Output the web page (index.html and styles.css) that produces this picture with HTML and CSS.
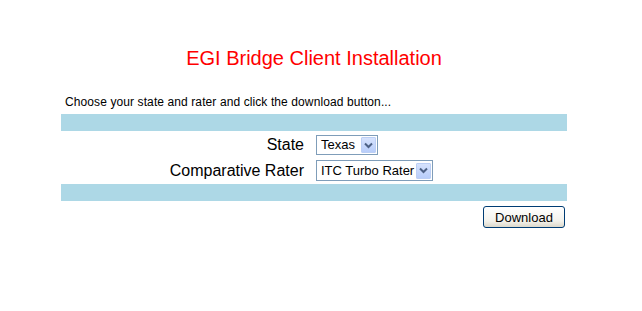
FILE: index.html
```html
<!DOCTYPE html>
<html>
<head>
<meta charset="utf-8">
<link rel="stylesheet" href="styles.css">
</head>
<body>
<div class="page">
  <h1 class="title">EGI Bridge Client Installation</h1>
  <div class="panel">
    <p class="intro">Choose your state and rater and click the download button...</p>
    <div class="bar"></div>
    <div class="form">
      <label class="label">State</label>
      <div class="field">
        <div class="select select-state">
          <span class="select-text">Texas</span>
          <span class="arrow"><svg width="9" height="7" viewBox="0 0 9 7"><path d="M1 1.5 L4.5 5 L8 1.5" fill="none" stroke="#4d6185" stroke-width="2"/></svg></span>
        </div>
      </div>
      <label class="label">Comparative Rater</label>
      <div class="field">
        <div class="select select-rater">
          <span class="select-text">ITC Turbo Rater</span>
          <span class="arrow"><svg width="9" height="7" viewBox="0 0 9 7"><path d="M1 1.5 L4.5 5 L8 1.5" fill="none" stroke="#4d6185" stroke-width="2"/></svg></span>
        </div>
      </div>
    </div>
    <div class="bar bar-bottom"></div>
    <div class="actions">
      <button class="btn">Download</button>
    </div>
  </div>
</div>
</body>
</html>
```
FILE: styles.css
```css
html, body {
  margin: 0;
  padding: 0;
  background: #ffffff;
}
body {
  font-family: "Liberation Sans", Arial, sans-serif;
  color: #000;
}
.page {
  width: 628px;
  padding-top: 46px;
}
.title {
  margin: 0;
  text-align: center;
  color: #ff0000;
  font-size: 20px;
  font-weight: normal;
  line-height: 24px;
}
.panel {
  width: 506px;
  margin: 25px auto 0;
}
.intro {
  margin: 0 0 4px 4px;
  font-size: 12px;
  line-height: 15px;
  letter-spacing: 0.1px;
}
.bar {
  height: 17px;
  background: #add8e6;
}
.bar-bottom {
  margin-top: 3px;
}
.form {
  display: grid;
  grid-template-columns: 243px 1fr;
  column-gap: 12px;
  row-gap: 5px;
  padding-top: 4px;
  align-items: center;
}
.label {
  text-align: right;
  font-size: 16px;
  line-height: 20px;
  white-space: nowrap;
}
.field {
  display: flex;
}
.select {
  display: flex;
  align-items: center;
  justify-content: space-between;
  box-sizing: border-box;
  border: 1px solid #7f9db9;
  background: #fff;
  font-size: 13px;
  padding: 0 1px 0 4px;
  white-space: nowrap;
}
.select-state {
  width: 62px;
  height: 20px;
}
.select-rater {
  width: 117px;
  height: 21px;
}
.select-text {
  line-height: 16px;
}
.arrow {
  display: flex;
  align-items: center;
  justify-content: center;
  flex: none;
  width: 15px;
  height: 16px;
  box-sizing: border-box;
  border: 1px solid #bccff5;
  background: linear-gradient(#d6e2fd, #b8cdfa);
  border-radius: 1px;
}
.actions {
  display: flex;
  justify-content: flex-end;
  padding: 5px 2px 0 0;
}
.btn {
  width: 82px;
  height: 22px;
  box-sizing: border-box;
  border: 1px solid #003c74;
  border-radius: 3px;
  background: linear-gradient(#ffffff, #f3f2ec 70%, #dcd8cb);
  font-family: "Liberation Sans", Arial, sans-serif;
  font-size: 13px;
  color: #000;
  padding: 0;
}
```
